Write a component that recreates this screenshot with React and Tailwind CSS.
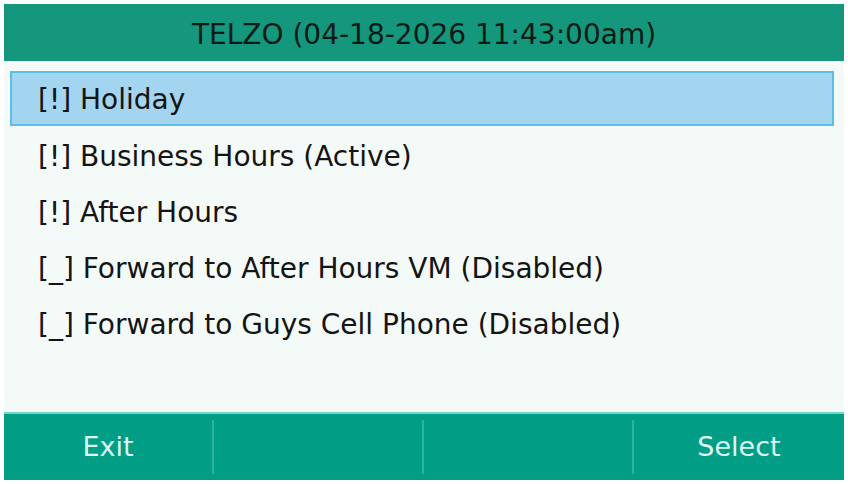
import React from "react";

const items = [
  { label: "[!] Holiday", selected: true },
  { label: "[!] Business Hours (Active)" },
  { label: "[!] After Hours" },
  { label: "[_] Forward to After Hours VM (Disabled)" },
  { label: "[_] Forward to Guys Cell Phone (Disabled)" },
];

const keys = ["Exit", "", "", "Select"];

export default function App() {
  return (
    <div className="w-[848px] h-[484px] bg-white pt-[4px] px-[4px] pb-[4px] font-['DejaVu_Sans',sans-serif]">
      <div className="flex h-full flex-col bg-[#f4faf7]">
        {/* title bar */}
        <div className="flex h-[57px] items-center justify-center pt-[4px] bg-[#14977d] text-[28px] text-[#0b1a15]">
          TELZO (04-18-2026 11:43:00am)
        </div>

        {/* menu list */}
        <ul className="flex flex-1 flex-col pl-[6px] pr-[10px] pt-[10px]">
          {items.map((item) => (
            <li
              key={item.label}
              className={
                item.selected
                  ? "flex h-[55px] items-center border-[2px] border-[#5cbde8] bg-[#a3d5f0] pl-[26px] pt-[2px] text-[28px] text-[#141414]"
                  : "flex h-[56px] items-center border-[2px] border-transparent pl-[26px] pt-[6px] text-[28px] text-[#141414]"
              }
            >
              {item.label}
            </li>
          ))}
        </ul>

        {/* soft keys */}
        <div className="grid h-[68px] grid-cols-4 border-t-[2px] border-[#6fd6c4] bg-[#019e85]">
          {keys.map((k, i) => (
            <div key={i} className="flex items-center py-[6px]">
              <div
                className={
                  i < 3
                    ? "flex h-full flex-1 items-center justify-center border-r-[2px] border-[#2fb39c] text-[27px] text-[#dcf7f0]"
                    : "flex h-full flex-1 items-center justify-center text-[27px] text-[#dcf7f0]"
                }
              >
                {k}
              </div>
            </div>
          ))}
        </div>
      </div>
    </div>
  );
}
